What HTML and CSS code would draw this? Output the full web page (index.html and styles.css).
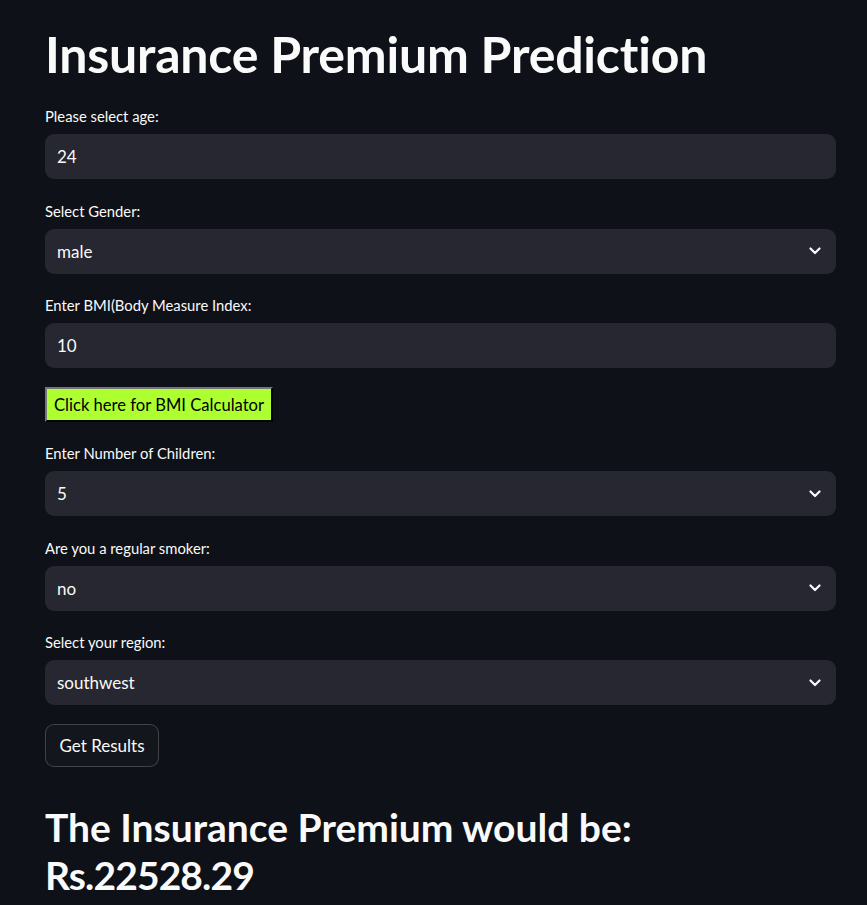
FILE: index.html
```html
<!DOCTYPE html>
<html>
<head>
<meta charset="utf-8">
<link rel="stylesheet" href="styles.css">
</head>
<body>
<main class="app">
  <h1 class="title">Insurance Premium Prediction</h1>

  <div class="field">
    <label class="label">Please select age:</label>
    <div class="input">24</div>
  </div>

  <div class="field">
    <label class="label">Select Gender:</label>
    <div class="input select">male<svg class="chev" viewBox="0 0 12 8" width="12" height="8"><path d="M1.5 1.5 L6 6 L10.5 1.5" fill="none" stroke="#fafafa" stroke-width="2.2" stroke-linecap="round" stroke-linejoin="round"/></svg></div>
  </div>

  <div class="field">
    <label class="label">Enter BMI(Body Measure Index:</label>
    <div class="input">10</div>
  </div>

  <div class="bmi-row"><button class="bmi-btn">Click here for BMI Calculator</button></div>

  <div class="field">
    <label class="label">Enter Number of Children:</label>
    <div class="input select">5<svg class="chev" viewBox="0 0 12 8" width="12" height="8"><path d="M1.5 1.5 L6 6 L10.5 1.5" fill="none" stroke="#fafafa" stroke-width="2.2" stroke-linecap="round" stroke-linejoin="round"/></svg></div>
  </div>

  <div class="field">
    <label class="label">Are you a regular smoker:</label>
    <div class="input select">no<svg class="chev" viewBox="0 0 12 8" width="12" height="8"><path d="M1.5 1.5 L6 6 L10.5 1.5" fill="none" stroke="#fafafa" stroke-width="2.2" stroke-linecap="round" stroke-linejoin="round"/></svg></div>
  </div>

  <div class="field">
    <label class="label">Select your region:</label>
    <div class="input select">southwest<svg class="chev" viewBox="0 0 12 8" width="12" height="8"><path d="M1.5 1.5 L6 6 L10.5 1.5" fill="none" stroke="#fafafa" stroke-width="2.2" stroke-linecap="round" stroke-linejoin="round"/></svg></div>
  </div>

  <div class="results-row"><button class="results-btn">Get Results</button></div>

  <h2 class="result">The Insurance Premium would be:<br><span class="amount">Rs.22528.29</span></h2>
</main>
</body>
</html>
```

FILE: styles.css
```css
html, body {
  margin: 0;
  padding: 0;
  background: #0e1117;
  color: #fafafa;
  font-family: "Lato", "Noto Sans", sans-serif;
  height: 100%;
  overflow: hidden;
}

.app {
  padding: 24px 31px 0 45px;
  display: flex;
  flex-direction: column;
}

.title {
  margin: 0;
  font-size: 50px;
  font-weight: 700;
  line-height: 60px;
  letter-spacing: -0.2px;
  height: 82px;
}

.field {
  display: flex;
  flex-direction: column;
  margin-bottom: 21.5px;
}

.label {
  font-size: 14.8px;
  line-height: 21px;
  height: 21px;
  margin-bottom: 7px;
  color: #fafafa;
}

.input {
  background: #262730;
  border-radius: 9px;
  height: 45px;
  box-sizing: border-box;
  padding: 0 12px;
  display: flex;
  align-items: center;
  font-size: 17px;
  color: #fafafa;
}

.select {
  justify-content: space-between;
}

.chev {
  margin-right: 3px;
}

.bmi-row {
  margin-top: -2.5px;
  margin-bottom: 21px;
}

.bmi-btn {
  background: #adff2f;
  color: #000;
  font-family: "Lato", "Noto Sans", sans-serif;
  font-size: 16.6px;
  height: 35px;
  padding: 0 7px;
  border: 2px solid;
  border-color: #767676 #000 #000 #767676;
  cursor: pointer;
}

.results-row {
  margin-top: -2.5px;
}

.results-btn {
  background: #13161d;
  color: #fafafa;
  font-family: "Lato", "Noto Sans", sans-serif;
  font-size: 17px;
  height: 43px;
  padding: 0 13.5px;
  border: 1px solid rgba(250, 250, 250, 0.2);
  border-radius: 9px;
}

.result {
  margin: 36px 0 0 0;
  font-size: 39px;
  font-weight: 700;
  line-height: 48px;
}

.amount {
  letter-spacing: -0.9px;
}
```
